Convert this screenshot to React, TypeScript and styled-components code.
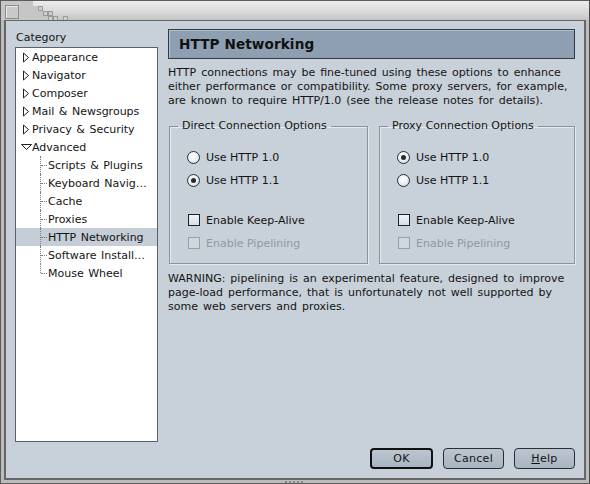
import React from 'react';
import styled, { createGlobalStyle, css } from 'styled-components';

const GlobalStyle = createGlobalStyle`
    html, body {
        margin: 0;
        padding: 0;
        background: #555;
    }
    body {
        font-family: 'DejaVu Sans', 'Liberation Sans', sans-serif;
        font-size: 11px;
        color: #141414;
    }
    * {
        box-sizing: border-box;
    }
`;

const Window = styled.div`
    width: 590px;
    height: 484px;
    display: flex;
    flex-direction: column;
    background: #bcbcbc;
    border: 1px solid #5c5c5c;
    border-right-color: #4a4a4a;
`;

const TitleBar = styled.div`
    height: 19px;
    flex: none;
    display: flex;
    align-items: flex-start;
    background: linear-gradient(#ededed, #d9d9d9 60%, #c4c4c4);
`;

const Client = styled.div`
    flex: 1;
    display: flex;
    flex-direction: column;
    margin: 0 3px 0 3px;
    border: 2px solid #666;
    border-top-width: 1px;
    background: #c8d0d9;
    padding: 8px 9px 9px 9px;
`;

const BottomEdge = styled.div`
    height: 3px;
    flex: none;
    display: flex;
    justify-content: center;
    align-items: center;
`;

const Grip = styled.div`
    width: 20px;
    height: 2px;
    background: repeating-linear-gradient(90deg, #8a8a8a 0 2px, transparent 2px 4px);
`;

const MainRow = styled.div`
    flex: 1;
    display: flex;
    gap: 10px;
    min-height: 0;
`;

const Sidebar = styled.div`
    width: 143px;
    display: flex;
    flex-direction: column;
`;

const SideLabel = styled.div`
    height: 18px;
    padding: 2px 0 0 1px;
    line-height: 14px;
`;

const Tree = styled.div`
    flex: 1;
    background: #fff;
    border: 1px solid #5b6069;
    word-spacing: 1px;
`;

const TreeRow = styled.div<{ $selected?: boolean; $child?: boolean }>`
    height: 18px;
    display: flex;
    align-items: center;
    padding-left: ${p => (p.$child ? '24px' : '4px')};
    white-space: nowrap;
    background: ${p => (p.$selected ? '#c5cdd6' : 'transparent')};
`;

const Twisty = styled.span`
    width: 12px;
    height: 12px;
    display: flex;
    align-items: center;
    justify-content: center;
`;

const Branch = styled.span<{ $last?: boolean }>`
    position: relative;
    width: 8px;
    height: 18px;
    &::before {
        content: '';
        position: absolute;
        left: 0;
        top: 0;
        height: ${p => (p.$last ? '9px' : '18px')};
        border-left: 1px dotted #7c7c7c;
    }
    &::after {
        content: '';
        position: absolute;
        left: 1px;
        top: 9px;
        width: 6px;
        border-top: 1px dotted #7c7c7c;
    }
`;

const Panel = styled.div`
    flex: 1;
    display: flex;
    flex-direction: column;
`;

const PanelHeader = styled.div`
    height: 30px;
    display: flex;
    align-items: center;
    padding-left: 10px;
    background: #8e9fb1;
    border: 1px solid #343a44;
    box-shadow: inset 1px 1px 0 #b4c0cd;
    font-size: 13.6px;
    font-weight: bold;
    letter-spacing: 0.1px;
    color: #111;
`;

const Paragraph = styled.p<{ $top: number }>`
    margin: ${p => p.$top}px 0 0 0;
    line-height: 14px;
    font-size: 11px;
    word-spacing: 1.5px;
`;

const Groups = styled.div`
    display: flex;
    gap: 11px;
    margin-top: 11px;
    padding-left: 1px;
`;

const Group = styled.fieldset<{ $width: number }>`
    width: ${p => p.$width}px;
    height: 145px;
    margin: 0;
    padding: 0;
    border: 1px solid #8b929b;
    box-shadow: 1px 1px 0 #e6eaef, inset 1px 1px 0 #e6eaef;
`;

const Legend = styled.legend`
    margin-left: 8px;
    padding: 0 4px;
    line-height: 14px;
    font-size: 11px;
`;

const OptionRow = styled.label<{ $gapTop: number; $disabled?: boolean }>`
    height: 18px;
    display: flex;
    align-items: center;
    gap: 6px;
    padding-left: 17px;
    margin-top: ${p => p.$gapTop}px;
    color: ${p => (p.$disabled ? '#8f98a3' : '#141414')};
`;

const RadioMark = styled.span<{ $checked?: boolean }>`
    width: 13px;
    height: 13px;
    border-radius: 50%;
    border: 1px solid #2c2f33;
    background: radial-gradient(circle at 45% 40%, #ffffff 0%, #eef2f5 45%, #c3ccd6 100%);
    display: flex;
    align-items: center;
    justify-content: center;
    &::after {
        content: '';
        width: 5px;
        height: 5px;
        border-radius: 50%;
        background: ${p => (p.$checked ? '#2a2a2a' : 'transparent')};
    }
`;

const CheckMark = styled.span<{ $disabled?: boolean }>`
    width: 12px;
    height: 12px;
    margin-left: 1px;
    border: 1px solid ${p => (p.$disabled ? '#98a0aa' : '#1e2024')};
    background: ${p => (p.$disabled ? '#d0d7df' : 'linear-gradient(#f2f5f8, #d6dde5)')};
`;

const ButtonRow = styled.div`
    display: flex;
    justify-content: flex-end;
    gap: 10px;
    margin-top: 6px;
`;

const Button = styled.button<{ $default?: boolean; $width: number }>`
    width: ${p => p.$width}px;
    height: 21px;
    padding: 0;
    border-radius: 4px;
    font-family: 'DejaVu Sans', 'Liberation Sans', sans-serif;
    font-size: 11px;
    letter-spacing: 0.3px;
    color: #141414;
    background: linear-gradient(#bcc6d1, #a8b4c1);
    border: 1px solid #2b2d31;
    ${p =>
        p.$default &&
        css`
            border-width: 2px;
            border-color: #111;
        `}
    u {
        text-decoration: underline;
    }
`;

const TitleDecor = () => (
    <svg width="80" height="19" viewBox="0 0 80 19">
        <polygon points="0,0 32,0 32,5 37,5 37,10 42,10 42,15 47,15 47,19 0,19" fill="#c6c6c6" />
        <rect x="4.5" y="4.5" width="13" height="13" fill="#c9c9c9" stroke="#8c8c8c" />
        <line x1="5" y1="5.5" x2="17" y2="5.5" stroke="#e8e8e8" />
        <line x1="5.5" y1="5" x2="5.5" y2="17" stroke="#e8e8e8" />
        {[
            [37, 5],
            [42, 10],
            [47, 10],
            [47, 15],
            [52, 15],
            [62, 15],
        ].map(([x, y]) => (
            <rect key={`${x}-${y}`} x={x + 0.5} y={y + 0.5} width="4" height="4" fill="#cfcfcf" stroke="#9a9a9a" />
        ))}
    </svg>
);

const RightTri = () => (
    <svg width="8" height="11" viewBox="0 0 8 11">
        <polygon points="1.5,1 6.5,5.5 1.5,10" fill="#fff" stroke="#222" />
    </svg>
);

const DownTri = () => (
    <svg width="11" height="8" viewBox="0 0 11 8">
        <polygon points="0.5,1.5 10.5,1.5 5.5,6.5" fill="#fff" stroke="#222" />
    </svg>
);

const topItems = ['Appearance', 'Navigator', 'Composer', 'Mail & Newsgroups', 'Privacy & Security'];
const advancedItems = [
    'Scripts & Plugins',
    'Keyboard Navig…',
    'Cache',
    'Proxies',
    'HTTP Networking',
    'Software Install…',
    'Mouse Wheel',
];

interface ConnectionGroupProps {
    title: string;
    width: number;
    version: '1.0' | '1.1';
}

const ConnectionGroup = ({ title, width, version }: ConnectionGroupProps) => (
    <Group $width={width}>
        <Legend>{title}</Legend>
        <OptionRow $gapTop={15}>
            <RadioMark $checked={version === '1.0'} />
            Use HTTP 1.0
        </OptionRow>
        <OptionRow $gapTop={5}>
            <RadioMark $checked={version === '1.1'} />
            Use HTTP 1.1
        </OptionRow>
        <OptionRow $gapTop={22}>
            <CheckMark />
            Enable Keep-Alive
        </OptionRow>
        <OptionRow $gapTop={5} $disabled>
            <CheckMark $disabled />
            Enable Pipelining
        </OptionRow>
    </Group>
);

const App = () => (
    <>
        <GlobalStyle />
        <Window>
            <TitleBar>
                <TitleDecor />
            </TitleBar>
            <Client>
                <MainRow>
                    <Sidebar>
                        <SideLabel>Category</SideLabel>
                        <Tree>
                            {topItems.map(item => (
                                <TreeRow key={item}>
                                    <Twisty>
                                        <RightTri />
                                    </Twisty>
                                    {item}
                                </TreeRow>
                            ))}
                            <TreeRow>
                                <Twisty>
                                    <DownTri />
                                </Twisty>
                                Advanced
                            </TreeRow>
                            {advancedItems.map((item, idx) => (
                                <TreeRow key={item} $child $selected={item === 'HTTP Networking'}>
                                    <Branch $last={idx === advancedItems.length - 1} />
                                    {item}
                                </TreeRow>
                            ))}
                        </Tree>
                    </Sidebar>
                    <Panel>
                        <PanelHeader>HTTP Networking</PanelHeader>
                        <Paragraph $top={7}>
                            HTTP connections may be fine-tuned using these options to enhance either performance or
                            compatibility. Some proxy servers, for example, are known to require HTTP/1.0 (see the
                            release notes for details).
                        </Paragraph>
                        <Groups>
                            <ConnectionGroup title="Direct Connection Options" width={199} version="1.1" />
                            <ConnectionGroup title="Proxy Connection Options" width={196} version="1.0" />
                        </Groups>
                        <Paragraph $top={8}>
                            WARNING: pipelining is an experimental feature, designed to improve page-load performance,
                            that is unfortunately not well supported by some web servers and proxies.
                        </Paragraph>
                    </Panel>
                </MainRow>
                <ButtonRow>
                    <Button $default $width={63}>
                        OK
                    </Button>
                    <Button $width={61}>Cancel</Button>
                    <Button $width={61}>
                        <u>H</u>elp
                    </Button>
                </ButtonRow>
            </Client>
            <BottomEdge>
                <Grip />
            </BottomEdge>
        </Window>
    </>
);

export default App;
